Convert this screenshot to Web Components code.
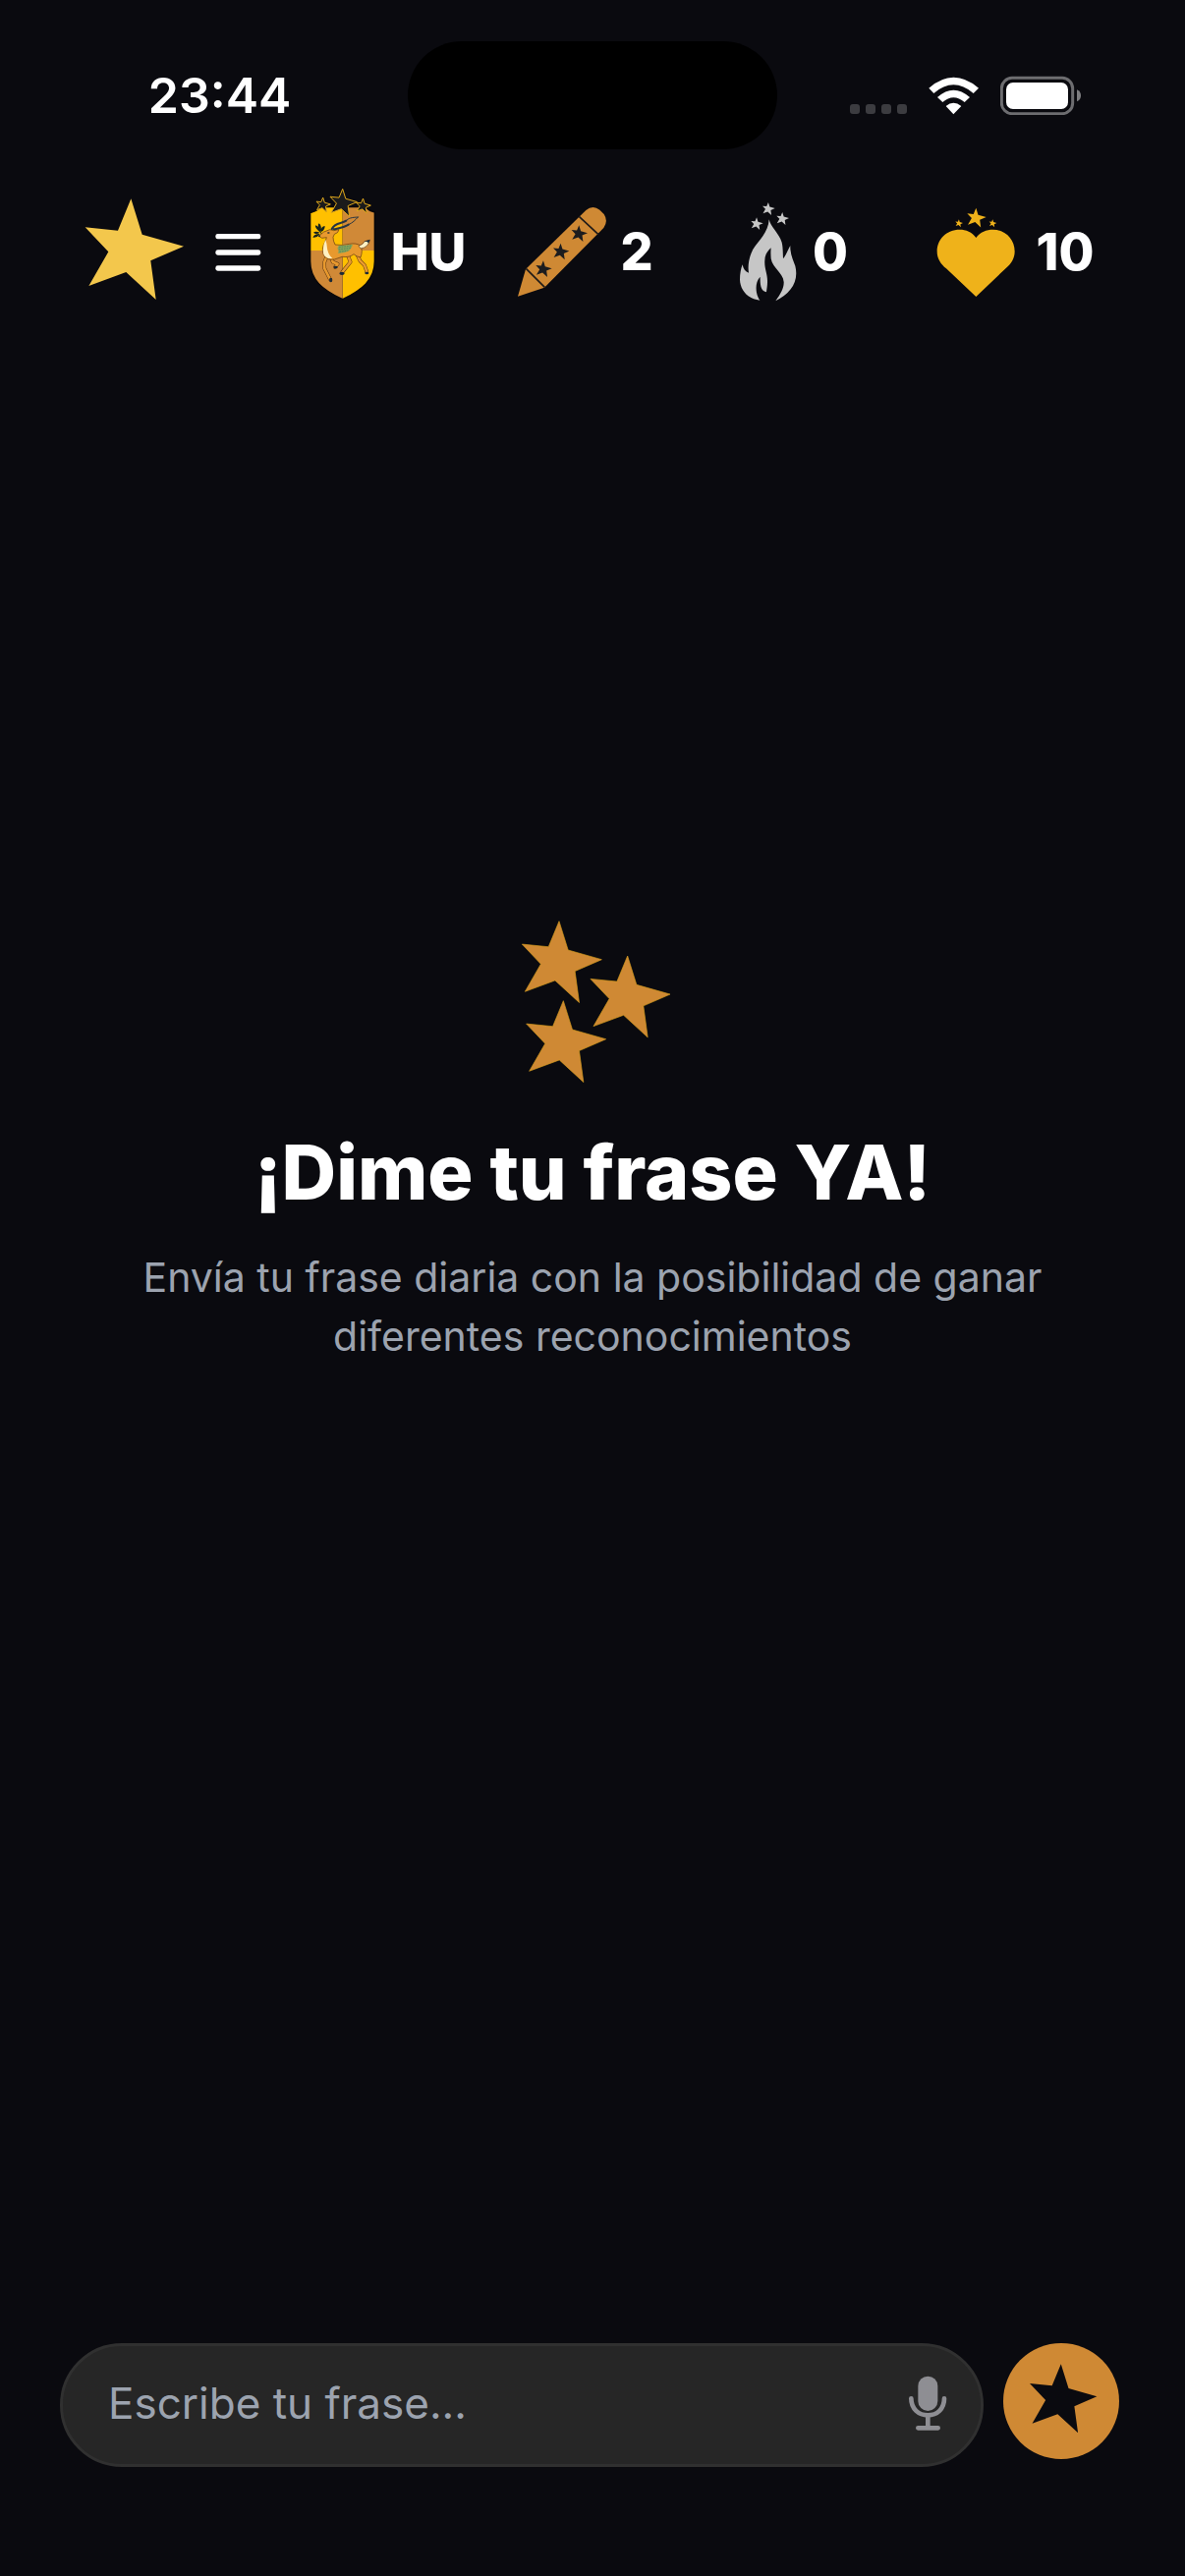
<!DOCTYPE html>
<html lang="es">
<head>
<meta charset="utf-8">
<meta name="viewport" content="width=device-width, initial-scale=1">
<title>Frase diaria</title>
<style>
    :root {
        --bg: #0a0a0f;
        --muted: #9ca3af;
    }
    body {
        margin: 0;
        background: var(--bg);
        color: #fff;
        font-family: Inter, "Liberation Sans", sans-serif;
    }
</style>
</head>
<body>
<phrase-app></phrase-app>

<script>
    // tilted five-point star in a box 100 wide
    const STAR = [[46.5, 0], [57.8, 36.2], [100, 48.2], [66.4, 62.8], [71.8, 102.3],
        [41.5, 74.4], [3.7, 88.4], [23.6, 53.8], [0, 28.9], [33.2, 32.2]];

    function star(x, y, size, attrs = "") {
        const points = STAR.map(([px, py]) => `${(x + px * size / 100).toFixed(1)},${(y + py * size / 100).toFixed(1)}`);
        return `<polygon points="${points.join(" ")}" ${attrs}/>`;
    }

    const LEGS = "M126 240L117 262L118 280L135 313M138 246L143 260L158 266L150 276M188 238L197 260L172 291M216 234L226 256L240 270L247 290";

    const ICONS = {
        logo: { box: "48 36 306 390", w: 102, h: 130, art: star(50, 67, 301, 'fill="#f3c74c"') },

        menu: {
            box: "447 36 141 390", w: 47, h: 130,
            art: `<g fill="#fff"><rect x="448" y="174" width="138" height="16" rx="7"/>
                <rect x="448" y="223" width="138" height="16" rx="7"/>
                <rect x="448" y="271" width="138" height="16" rx="7"/></g>`
        },

        shield: {
            box: "69 36 210 390", w: 70, h: 130,
            art: `
                <clipPath id="crest"><path d="M74 110Q96 104 106 92H242Q254 104 271 108V258C271 315 232 345 173 374C112 345 74 315 74 258Z"/></clipPath>
                <g clip-path="url(#crest)">
                    <path fill="#ffc000" d="M66 80H173V225H66ZM173 225H280V380H173Z"/>
                    <path fill="#d08937" d="M173 80H280V225H173ZM66 225H173V380H66Z"/>
                </g>
                <path fill="none" stroke="#050507" stroke-width="4" d="M74 110Q96 104 106 92H242Q254 104 271 108V258C271 315 232 345 173 374C112 345 74 315 74 258Z"/>
                <g fill="#1b1b1b" stroke="#e0a81c" stroke-width="3">
                    ${star(93, 63, 43)}${star(215, 66, 44)}${star(135, 37, 82)}
                </g>
                <g fill="#14231c">
                    <path d="M103 168Q88 156 90 148Q101 151 104 164ZM104 165Q94 149 101 142Q111 151 106 165ZM106 167Q107 151 119 150Q119 162 108 168ZM104 170Q90 164 84 170Q91 177 103 171ZM103 174Q85 175 82 185Q94 188 104 175Z"/>
                    <path d="M103 165L112 178" stroke="#14231c" stroke-width="3"/>
                </g>
                <g fill="none" stroke-linejoin="round" stroke-linecap="round">
                    <path stroke="#5c3712" stroke-width="11" d="${LEGS}"/>
                    <path stroke="#e8992e" stroke-width="8" d="${LEGS}"/>
                </g>
                <path fill="#e8992e" stroke="#5c3712" stroke-width="2" d="M101 181Q112 166 134 161L146 164L162 161Q160 172 148 175L144 184Q144 196 150 207Q172 211 193 205Q215 201 227 210Q236 224 228 246Q215 244 207 236Q195 247 172 244L148 252Q124 256 115 238Q107 219 120 198L124 185L110 187Z"/>
                <path fill="#fff0c2" d="M121 192Q125 203 126 218Q129 238 142 249Q122 251 115 236Q110 215 121 192Z"/>
                <path fill="#fff0c2" stroke="#5c3712" stroke-width="2" d="M222 211Q236 206 240 197L256 194Q251 216 228 219Z"/>
                <path fill="#86a35a" d="M161 210Q185 209 204 206Q201 218 193 226Q177 235 158 233Q164 225 157 219Z"/>
                <path fill="none" stroke="#3d7a62" stroke-width="2" stroke-dasharray="5 3" d="M162 215L201 210M161 222L198 217M163 229L190 225"/>
                <g fill="none" stroke="#273542" stroke-linecap="round">
                    <path stroke-width="6" d="M140 159C150 138 170 144 184 134M146 160C164 156 180 154 191 146"/>
                    <path stroke-width="3" d="M184 134C191 126 200 124 220 123M191 146C205 140 211 132 220 123"/>
                </g>
                <g fill="#1c2a36">
                    <ellipse cx="130" cy="171" rx="4" ry="2"/><circle cx="102" cy="181" r="3"/>
                    <ellipse cx="171" cy="295" rx="8" ry="5"/><ellipse cx="137" cy="315" rx="5" ry="7"/>
                    <ellipse cx="247" cy="294" rx="6" ry="4"/><ellipse cx="152" cy="276" rx="6" ry="4"/>
                    <path d="M238 197L257 191L252 203L248 198Z"/>
                </g>`
        },

        pencil: {
            box: "54 6 270 390", w: 90, h: 130,
            art: `<path fill="#cf8934" d="M54 335L78 252L262 72Q283 54 304 71L317 84Q331 105 316 126L135 308Z"/>
                <path fill="none" stroke="#201b18" stroke-width="5" d="M79 250L136 307M241 91L300 146"/>
                <g fill="#1c1c1e">${star(218, 118, 49)}${star(162, 173, 49)}${star(109, 226, 49)}</g>`
        },

        flame: {
            box: "96 6 180 390", w: 60, h: 130,
            art: `<g fill="#c6c6c6">
                <path d="M185 100C189 122 216 143 224 170C228 186 227 205 228 220C236 212 242 193 250 180C249 207 259 225 265 242C277 291 250 326 205 349C220 328 231 311 230 291C228 263 196 249 191 220C190 208 190 197 191 187C180 197 172 208 172 225C170 251 181 266 180 292C180 303 178 313 177 322C162 319 157 305 158 275C146 288 144 305 147 323C149 333 153 341 157 347C119 343 97 314 96 284C96 266 99 250 104 238C106 251 113 260 123 263C119 239 125 211 137 190C154 164 183 140 185 100Z"/>
                ${star(165, 48, 38)}${star(208, 78, 38)}${star(130, 94, 37)}</g>`
        },

        heart: {
            box: "63 6 264 390", w: 88, h: 130,
            art: `<g fill="#efb21a">
                <path d="M184 156C172 138 153 131 134 131C94 131 65 160 65 198C65 220 77 237 93 250L184 336L276 248C292 235 302 218 302 198C302 160 272 131 236 131C216 131 197 138 184 156Z"/>
                ${star(157, 65, 58)}${star(121, 100, 23)}${star(224, 100, 23)}</g>`
        },

        trio: {
            box: "66 48 486 504", w: 162, h: 168,
            art: `<g fill="#cf8934" stroke="#d39b1c" stroke-width="2">
                ${star(94, 53, 243)}${star(303, 159, 243)}${star(107, 296, 243)}</g>`
        },

        mic: {
            box: "132 168 120 168", w: 40, h: 56,
            art: `<rect x="163" y="170" width="60" height="106" rx="30" fill="#8e8e93"/>
                <path fill="none" stroke="#8e8e93" stroke-width="14" stroke-linecap="round" d="M142 238C142 270 165 289 193 289S243 270 243 238M193 290V328M163 328H224"/>`
        },

        send: {
            box: "423 78 354 354", w: 118, h: 118,
            art: `<circle cx="600" cy="255" r="177" fill="#cf8934"/>${star(504, 142, 205, 'fill="#0a0a0f"')}`
        },

        signal: {
            box: "0 0 58 40", w: 58, h: 40,
            art: `<g fill="#3c3c40"><rect y="29" width="10" height="10" rx="3"/><rect x="16" y="29" width="10" height="10" rx="3"/>
                <rect x="32" y="29" width="10" height="10" rx="3"/><rect x="48" y="29" width="10" height="10" rx="3"/></g>`
        },

        wifi: {
            box: "495 111 153 120", w: 51, h: 40,
            art: `<g fill="#fff"><path d="M496 149Q571 84 648 149L632 165Q571 113 511 165Z"/>
                <path d="M522 177Q571 133 621 177L605 192Q571 164 538 192Z"/>
                <path d="M548 204Q571 184 595 204L571 229Z"/></g>`
        },

        battery: {
            box: "714 111 249 120", w: 83, h: 40,
            art: `<rect x="718" y="118" width="217" height="109" rx="32" fill="none" stroke="#6d6d70" stroke-width="9"/>
                <rect x="732" y="132" width="189" height="81" rx="21" fill="#fff"/>
                <path fill="#7d7d80" d="M948 154Q960 159 960 172T948 190Z"/>`
        }
    };

    class AppIcon extends HTMLElement {
        constructor() {
            super();
            this.attachShadow({ mode: "open" });
        }

        connectedCallback() {
            const icon = ICONS[this.getAttribute("name")];
            this.shadowRoot.innerHTML = `
                <style>
                    :host { display: block; flex: none; }
                    svg { display: block; }
                </style>
                <svg width="${icon.w}" height="${icon.h}" viewBox="${icon.box}" aria-hidden="true">${icon.art}</svg>
            `;
        }
    }

    class StatusBar extends HTMLElement {
        constructor() {
            super();
            this.attachShadow({ mode: "open" });
            this.shadowRoot.innerHTML = `
                <style>
                    :host {
                        display: grid; grid-template-columns: 1fr 376px 1fr;
                        align-items: center; padding: 42px 0 40px;
                    }
                    time { justify-self: center; padding-left: 32px; font-size: 50px; line-height: 60px; font-weight: 600; }
                    .island { height: 110px; border-radius: 55px; background: #000; }
                    .system { display: flex; justify-content: center; gap: 22px; padding-right: 32px; }
                </style>
                <time><slot></slot></time>
                <div class="island"></div>
                <div class="system">
                    <app-icon name="signal"></app-icon>
                    <app-icon name="wifi"></app-icon>
                    <app-icon name="battery"></app-icon>
                </div>
            `;
        }
    }

    class StatBadge extends HTMLElement {
        constructor() {
            super();
            this.attachShadow({ mode: "open" });
        }

        connectedCallback() {
            this.shadowRoot.innerHTML = `
                <style>
                    :host { display: flex; align-items: center; justify-content: center; gap: 14px; }
                    span { font-size: 52px; line-height: 60px; font-weight: 800; }
                </style>
                <app-icon name="${this.getAttribute("icon")}"></app-icon>
                <span><slot></slot></span>
            `;
        }
    }

    class TopBar extends HTMLElement {
        constructor() {
            super();
            this.attachShadow({ mode: "open" });
            this.shadowRoot.innerHTML = `
                <style>
                    :host { display: block; }
                    header {
                        display: grid; grid-template-columns: 207fr 202fr 202fr 222fr 228fr;
                        padding: 0 59px 0 86px;
                    }
                    button {
                        display: flex; gap: 31px; padding: 0; border: 0;
                        background: none; cursor: pointer;
                    }
                </style>
                <header>
                    <button type="button" aria-label="Menú">
                        <app-icon name="logo"></app-icon>
                        <app-icon name="menu"></app-icon>
                    </button>
                    <slot></slot>
                </header>
            `;
        }
    }

    class PhraseIntro extends HTMLElement {
        constructor() {
            super();
            this.attachShadow({ mode: "open" });
            this.shadowRoot.innerHTML = `
                <style>
                    :host {
                        display: flex; flex-direction: column; align-items: center;
                        padding: 0 120px; text-align: center;
                    }
                    h1 { margin: 43px 0 31px; font-size: 77px; line-height: 92px; font-weight: 800; }
                    p { margin: 0; color: var(--muted); font-size: 41px; line-height: 60px; }
                </style>
                <app-icon name="trio"></app-icon>
                <h1><slot name="title"></slot></h1>
                <p><slot></slot></p>
            `;
        }
    }

    class PhraseComposer extends HTMLElement {
        constructor() {
            super();
            this.attachShadow({ mode: "open" });
            this.shadowRoot.innerHTML = `
                <style>
                    :host { display: block; }
                    form { display: flex; align-items: flex-start; gap: 20px; padding: 0 67px 111px 61px; }
                    .field {
                        flex: 1; min-width: 0; display: flex; align-items: center;
                        box-sizing: border-box; height: 126px; padding: 0 34px 4px 46px;
                        background: #262626; border: 3px solid #303030; border-radius: 63px;
                    }
                    input {
                        flex: 1; min-width: 0; padding: 0; border: 0; outline: 0;
                        background: none; color: #fff; font: inherit; font-size: 44px; line-height: 60px;
                    }
                    input::placeholder { color: var(--muted); opacity: 1; }
                    button { flex: none; padding: 0; border: 0; background: none; cursor: pointer; }
                    .send { border-radius: 50%; }
                </style>
                <form>
                    <div class="field">
                        <input type="text" name="frase" aria-label="Tu frase" placeholder="Escribe tu frase...">
                        <button type="button" aria-label="Dictar"><app-icon name="mic"></app-icon></button>
                    </div>
                    <button class="send" type="submit" aria-label="Enviar"><app-icon name="send"></app-icon></button>
                </form>
            `;
        }

        connectedCallback() {
            this.shadowRoot.querySelector("form").addEventListener("submit", (e) => e.preventDefault());
        }
    }

    class PhraseApp extends HTMLElement {
        constructor() {
            super();
            this.attachShadow({ mode: "open" });
            this.shadowRoot.innerHTML = `
                <style>
                    :host { display: flex; flex-direction: column; min-height: 100vh; }
                    main {
                        flex: 1; display: flex; flex-direction: column;
                        justify-content: center; padding-bottom: 382px;
                    }
                </style>
                <status-bar>23:44</status-bar>
                <top-bar>
                    <stat-badge icon="shield">HU</stat-badge>
                    <stat-badge icon="pencil">2</stat-badge>
                    <stat-badge icon="flame">0</stat-badge>
                    <stat-badge icon="heart">10</stat-badge>
                </top-bar>
                <main>
                    <phrase-intro>
                        <span slot="title">¡Dime tu frase YA!</span>
                        Envía tu frase diaria con la posibilidad de ganar diferentes reconocimientos
                    </phrase-intro>
                </main>
                <phrase-composer></phrase-composer>
            `;
        }
    }

    customElements.define("app-icon", AppIcon);
    customElements.define("status-bar", StatusBar);
    customElements.define("stat-badge", StatBadge);
    customElements.define("top-bar", TopBar);
    customElements.define("phrase-intro", PhraseIntro);
    customElements.define("phrase-composer", PhraseComposer);
    customElements.define("phrase-app", PhraseApp);
</script>
</body>
</html>
